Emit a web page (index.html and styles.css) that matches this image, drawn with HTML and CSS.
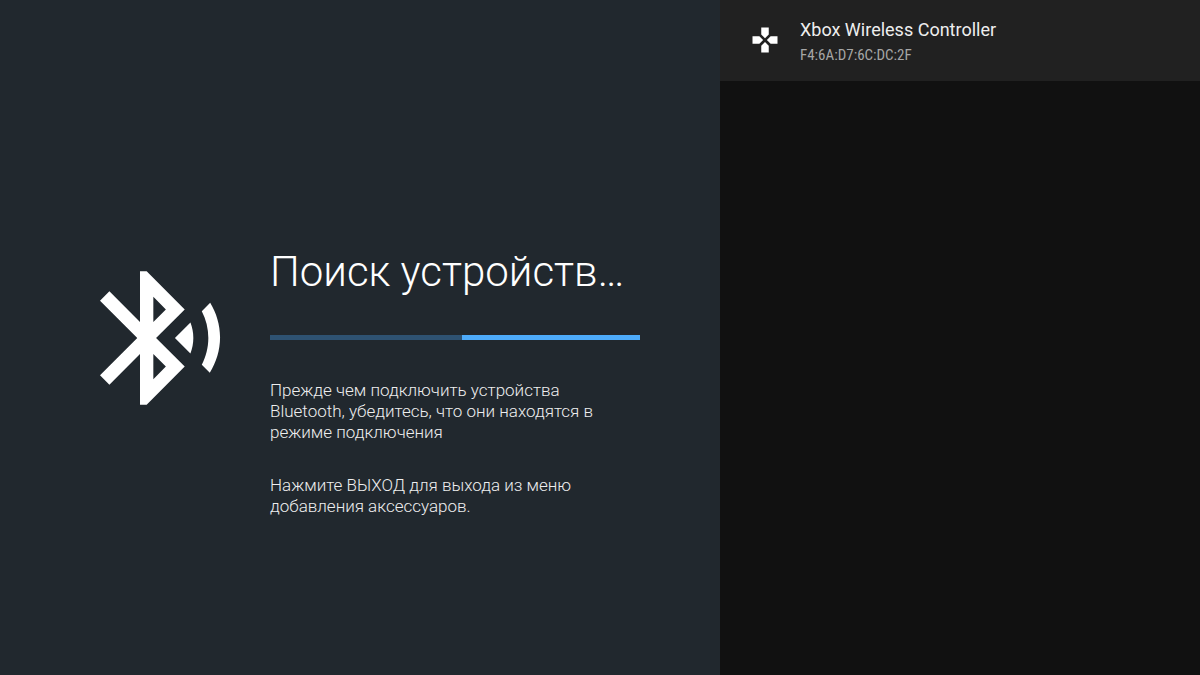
FILE: index.html
```html
<!DOCTYPE html>
<html lang="ru">
<head>
  <meta charset="UTF-8" />
  <meta name="viewport" content="width=device-width, initial-scale=1.0"/>
  <title>Поиск устройств</title>
  <link rel="stylesheet" href="styles.css">
</head>
<body>

  <main class="search">
    <svg class="search-icon" viewBox="0 0 24 24" aria-hidden="true">
      <path d="M14.24 12.01l2.32 2.32c.28-.72.44-1.51.44-2.33 0-.82-.16-1.59-.43-2.31l-2.33 2.32zm5.29-5.3l-1.26 1.26c.63 1.21.98 2.57.98 4.02s-.36 2.82-.98 4.02l1.2 1.2c.97-1.54 1.54-3.36 1.54-5.31-.01-1.89-.55-3.67-1.48-5.19zm-3.82 1L10 2H9v7.59L4.41 5 3 6.41 8.59 12 3 17.59 4.41 19 9 14.41V22h1l5.71-5.71-4.3-4.29 4.3-4.29zM11 5.83l1.88 1.88L11 9.59V5.83zm1.88 10.46L11 18.17v-3.76l1.88 1.88z"/>
    </svg>
    <div class="search-content">
      <h1 id="search_title">Поиск устройств…</h1>
      <progress class="search-progress" aria-labelledby="search_title"></progress>
      <div class="search-help">
        <p>Прежде чем подключить устройства Bluetooth, убедитесь, что они находятся в режиме подключения</p>
        <p>Нажмите ВЫХОД для выхода из меню добавления аксессуаров.</p>
      </div>
    </div>
  </main>

  <aside class="devices">
    <ul class="device-list">
      <li>
        <button class="device" type="button">
          <svg class="device-icon" viewBox="0 0 24 24" aria-hidden="true">
            <path d="M15 7.5V2H9v5.5l3 3 3-3zM7.5 9H2v6h5.5l3-3-3-3zM9 16.5V22h6v-5.5l-3-3-3 3zM16.5 9l-3 3 3 3H22V9h-5.5z"/>
          </svg>
          <span class="device-info">
            <span class="device-name">Xbox Wireless Controller</span>
            <span class="device-address">F4:6A:D7:6C:DC:2F</span>
          </span>
        </button>
      </li>
    </ul>
  </aside>

</body>
</html>
```
FILE: styles.css
```css
body {
  margin: 0;
  min-height: 100vh;
  display: grid;
  grid-template-columns: 3fr 2fr;
  font-family: Roboto, sans-serif;
  background: #111;
  color: #fff;
}

.search {
  display: flex;
  align-items: center;
  gap: 30px;
  padding: 0 80px;
  background: #21282e;
}

.search-icon {
  flex: none;
  width: 160px;
  fill: #fff;
}

/* the progress bar stays in the middle, title above and help below */
.search-content {
  flex: 1;
  align-self: stretch;
  display: grid;
  grid-template-rows: 1fr auto 1fr;
}

h1 {
  align-self: end;
  margin: 0 0 38px;
  font-size: 42px;
  font-weight: 300;
  line-height: 50px;
}

.search-progress {
  appearance: none;
  display: block;
  width: 100%;
  height: 5px;
  border: none;
}

.search-progress::-webkit-progress-bar {
  background: linear-gradient(to right, #2e5272 52%, #4dabfa 52%);
}

.search-help {
  padding: 40px 20px 0 0;
  font-size: 17px;
  font-weight: 300;
  line-height: 21px;
  color: #eee;
}

.search-help p {
  margin: 0 0 32px;
}

.device-list {
  list-style-type: none;
  margin: 0;
  padding: 0;
}

.device {
  display: flex;
  align-items: center;
  gap: 20px;
  width: 100%;
  padding: 15px 30px 16px;
  border: none;
  background: #212121;
  color: #eee;
  font-family: inherit;
  text-align: left;
  cursor: pointer;
}

.device-icon {
  flex: none;
  width: 30px;
  fill: #fff;
}

.device-info {
  display: flex;
  flex-direction: column;
}

.device-name {
  font-size: 18px;
  line-height: 30px;
}

.device-address {
  font-family: "Roboto Condensed", Roboto, sans-serif;
  font-size: 15px;
  line-height: 20px;
  color: #a6a6a6;
}
```
